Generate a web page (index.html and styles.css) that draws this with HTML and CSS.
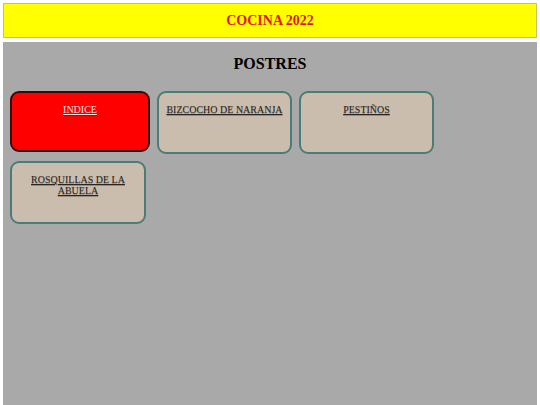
FILE: index.html
```html
<!DOCTYPE html>
<html lang="es">
<head>
<meta charset="utf-8">
<title>Cocina 2022</title>
<link rel="stylesheet" href="styles.css">
</head>
<body>
<header class="top">
  <h1 class="top-title">COCINA 2022</h1>
</header>
<main class="panel">
  <h2 class="panel-title">POSTRES</h2>
  <div class="cards">
    <a class="card card-index" href="#">INDICE</a>
    <a class="card" href="#">BIZCOCHO DE NARANJA</a>
    <a class="card" href="#">PESTIÑOS</a>
    <a class="card card-narrow" href="#">ROSQUILLAS DE LA ABUELA</a>
  </div>
</main>
</body>
</html>
```
FILE: styles.css
```css
html, body {
  margin: 0;
  padding: 0;
}
body {
  padding: 3px 3px 0;
  font-family: "Liberation Serif", "Times New Roman", serif;
  background: #ffffff;
}
.top {
  background: #ffff00;
  border: 1px solid #c8c070;
  height: 33px;
  display: flex;
  align-items: center;
  justify-content: center;
}
.top-title {
  margin: 0;
  font-size: 14px;
  font-weight: bold;
  color: #e0180c;
}
.panel {
  margin-top: 4px;
  background: #a9a9a9;
  height: 363px;
  padding: 1px 7px 7px;
  box-sizing: border-box;
}
.panel-title {
  margin: 12px 0 18px;
  text-align: center;
  font-size: 16px;
  font-weight: bold;
  color: #000;
}
.cards {
  display: flex;
  flex-wrap: wrap;
  gap: 7px;
}
.card {
  box-sizing: border-box;
  width: 135px;
  height: 63px;
  padding: 11px 4px 0;
  border: 2px solid #4a7c78;
  border-radius: 9px;
  background: #cbbdad;
  color: #2a2624;
  font-size: 10px;
  line-height: 11px;
  text-align: center;
  text-decoration: underline;
  text-shadow: 0 1px 0 rgba(90, 80, 72, 0.45);
}
.card-index {
  width: 140px;
  height: 61px;
  background: #ff0000;
  border-color: #3a0808;
  color: #ffe0e0;
  text-shadow: 0 1px 0 rgba(120, 0, 0, 0.5);
}
.card-narrow {
  width: 136px;
  padding-left: 16px;
  padding-right: 16px;
}
```
